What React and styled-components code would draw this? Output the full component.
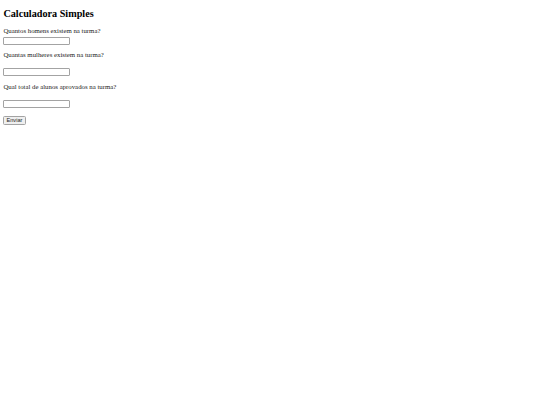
import React from 'react';
import styled, { createGlobalStyle } from 'styled-components';

const GlobalStyle = createGlobalStyle`
  html, body {
    margin: 0;
    padding: 0;
    background: #fff;
  }
  body {
    font-family: "Liberation Serif", "Times New Roman", serif;
    color: #1a1a1a;
  }
`;

const Page = styled.div`
  padding: 8px 3.4px 0;
  display: flex;
  flex-direction: column;
  align-items: flex-start;
`;

const Title = styled.h2`
  margin: 0;
  font-size: 10.2px;
  line-height: 12px;
  font-weight: bold;
  color: #000;
`;

const Form = styled.form`
  display: flex;
  flex-direction: column;
  align-items: flex-start;
`;

const Label = styled.label`
  display: block;
  font-size: 6.8px;
  line-height: 8px;
  margin-top: ${p => p.$top}px;
`;

const Input = styled.input`
  box-sizing: border-box;
  width: 66.5px;
  height: 8.5px;
  margin: ${p => p.$top}px 0 0;
  padding: 0;
  border: 1px solid #a3a3a3;
  border-radius: 1px;
  background: #fff;
`;

const Button = styled.button`
  box-sizing: border-box;
  margin: 8px 0 0 -0.6px;
  width: 23.3px;
  height: 9px;
  padding: 0;
  font-family: "Liberation Sans", Arial, sans-serif;
  font-size: 5.6px;
  line-height: 7px;
  color: #222;
  background: #efefef;
  border: 1px solid #a3a3a3;
  border-radius: 1.5px;
`;

const fields = [
  { label: 'Quantos homens existem na turma?', top: 6.8, inputTop: 2 },
  { label: 'Quantas mulheres existem na turma?', top: 5.5, inputTop: 9 },
  { label: 'Qual total de alunos aprovados na turma?', top: 6.8, inputTop: 8.8 },
];

export default function App() {
  return (
    <>
      <GlobalStyle />
      <Page>
        <Title>Calculadora Simples</Title>
        <Form onSubmit={e => e.preventDefault()}>
          {fields.map(f => (
            <React.Fragment key={f.label}>
              <Label $top={f.top}>{f.label}</Label>
              <Input type="text" $top={f.inputTop} />
            </React.Fragment>
          ))}
          <Button type="submit">Enviar</Button>
        </Form>
      </Page>
    </>
  );
}
